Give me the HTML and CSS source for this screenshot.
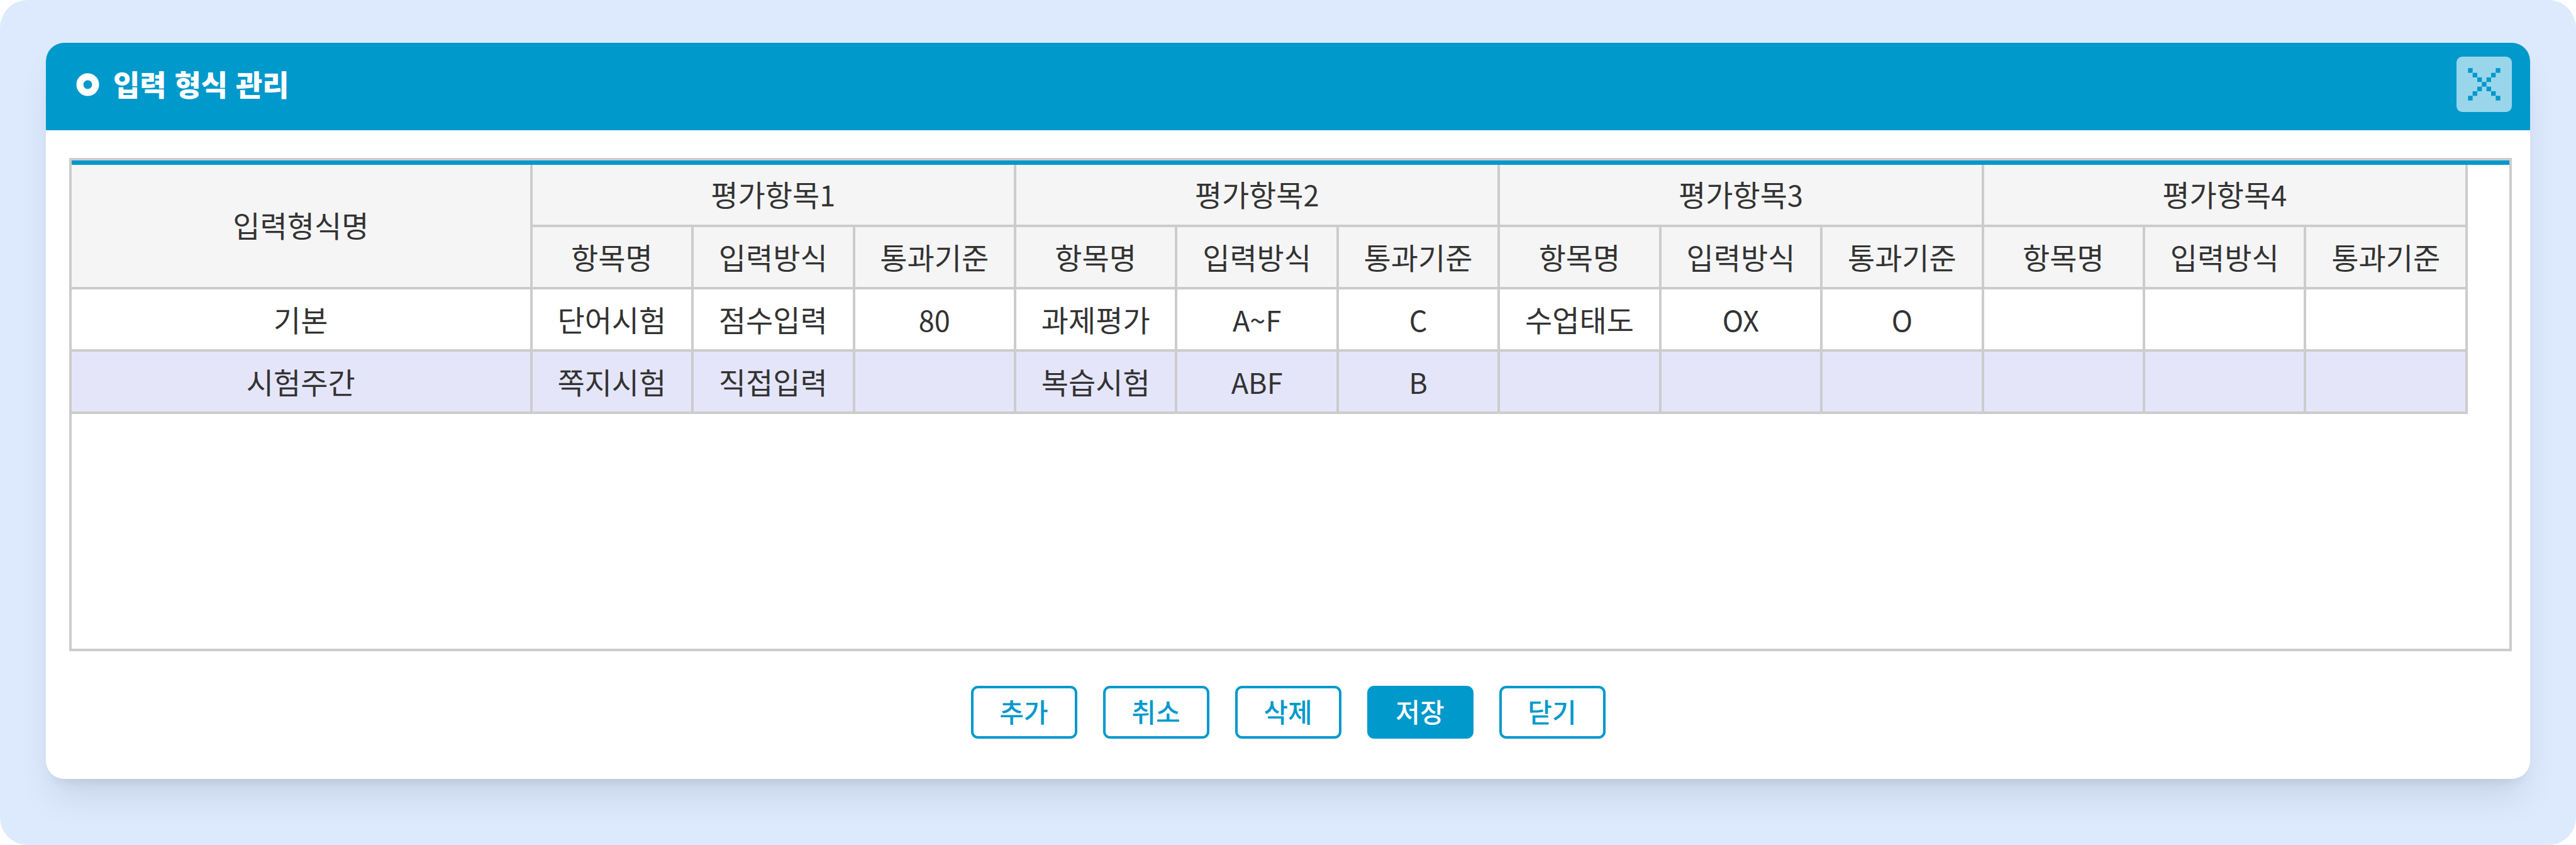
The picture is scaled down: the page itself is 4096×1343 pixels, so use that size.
FILE: index.html
```html
<!DOCTYPE html>
<html lang="ko">
<head>
<meta charset="utf-8">
<meta name="viewport" content="width=device-width, initial-scale=1">
<title>입력 형식 관리</title>
<link rel="stylesheet" href="styles.css">
</head>
<body>
<main class="stage">
  <section class="dialog" aria-labelledby="dialog-title">
    <header class="dialog-header">
      <svg class="bullet" viewBox="0 0 40 40" aria-hidden="true">
        <circle cx="20" cy="20" r="13.5" fill="none" stroke="#fff" stroke-width="12"/>
      </svg>
      <h1 class="dialog-title" id="dialog-title">입력 형식 관리</h1>
      <button class="close" type="button" aria-label="창 닫기">
        <svg class="close-icon" viewBox="0 0 96 96" aria-hidden="true">
          <rect width="96" height="96" rx="10" fill="#99d6eb"/>
          <path fill="#0099cc" d="M20 20h8v8h-8zM28 28h8v8h-8zM36 36h8v8h-8zM44 44h8v8h-8zM52 52h8v8h-8zM60 60h8v8h-8zM68 68h8v8h-8zM68 20h8v8h-8zM60 28h8v8h-8zM52 36h8v8h-8zM36 52h8v8h-8zM28 60h8v8h-8zM20 68h8v8h-8z"/>
        </svg>
      </button>
    </header>
    <div class="dialog-body">
      <div class="grid-frame">
        <table class="grid">
          <colgroup><col class="col-name"><col span="12"></colgroup>
          <thead>
            <tr class="groups"><th rowspan="2">입력형식명</th><th colspan="3">평가항목<span class="latin">1</span></th><th colspan="3">평가항목<span class="latin">2</span></th><th colspan="3">평가항목<span class="latin">3</span></th><th colspan="3">평가항목<span class="latin">4</span></th></tr>
            <tr><th>항목명</th><th>입력방식</th><th>통과기준</th><th>항목명</th><th>입력방식</th><th>통과기준</th><th>항목명</th><th>입력방식</th><th>통과기준</th><th>항목명</th><th>입력방식</th><th>통과기준</th></tr>
          </thead>
          <tbody>
            <tr><td>기본</td><td>단어시험</td><td>점수입력</td><td><span class="latin">80</span></td><td>과제평가</td><td><span class="latin">A~F</span></td><td><span class="latin">C</span></td><td>수업태도</td><td><span class="latin">OX</span></td><td><span class="latin">O</span></td><td></td><td></td><td></td></tr>
            <tr class="selected"><td>시험주간</td><td>쪽지시험</td><td>직접입력</td><td></td><td>복습시험</td><td><span class="latin">ABF</span></td><td><span class="latin">B</span></td><td></td><td></td><td></td><td></td><td></td><td></td></tr>
          </tbody>
        </table>
      </div>
    </div>
    <footer class="actions">
      <button class="btn" type="button">추가</button>
      <button class="btn" type="button">취소</button>
      <button class="btn" type="button">삭제</button>
      <button class="btn btn-primary" type="button">저장</button>
      <button class="btn" type="button">닫기</button>
    </footer>
  </section>
</main>
</body>
</html>
```
FILE: styles.css
```css
* {
  box-sizing: border-box;
}

body {
  margin: 0;
  background: #fff;
  color: #333;
  font-family: "Noto Sans CJK KR", sans-serif;
}

.stage {
  min-height: 100vh;
  padding: 68px 73px 105px;
  border-radius: 44px;
  background: #ddeafe;
}

.dialog {
  border-radius: 29px;
  background: #fff;
  box-shadow: 0 37px 55px -11px rgba(0, 0, 0, 0.1), 0 15px 22px -15px rgba(0, 0, 0, 0.1);
}

.dialog-header {
  display: flex;
  align-items: center;
  gap: 22px;
  height: 139px;
  padding: 0 29px 7px 48px;
  border-radius: 29px 29px 0 0;
  background: #0099cc;
  color: #fff;
}

.bullet {
  width: 37px;
  height: 37px;
}

.dialog-title {
  margin: 0;
  padding-bottom: 4px;
  font-size: 46px;
  line-height: 72px;
  font-weight: 900;
}

.close {
  width: 88px;
  height: 88px;
  margin-left: auto;
  padding: 0;
  border: 0;
  background: none;
}

.close-icon {
  display: block;
  width: 100%;
  height: 100%;
}

.dialog-body {
  padding: 44px 29px 0 37px;
}

.grid-frame {
  min-height: 784px;
  padding: 7px 66px 0 0;
  border: 4px solid #ccc;
  background: linear-gradient(#0099cc, #0099cc) 0 0 / 100% 7px no-repeat;
}

.grid {
  width: 100%;
  border-collapse: separate;
  border-spacing: 0;
  table-layout: fixed;
  font-size: 47px;
  line-height: 72px;
}

.col-name {
  width: 19.23%;
}

.grid th,
.grid td {
  height: 99px;
  padding: 0 0 2px;
  border-right: 4px solid #ccc;
  border-bottom: 4px solid #ccc;
  font-weight: 400;
  text-align: center;
  white-space: nowrap;
}

.grid th {
  background: #f5f5f5;
}

.grid .groups th {
  padding-bottom: 4px;
}

.latin {
  font-size: 45px;
  line-height: 1;
}

.selected {
  background: #e5e5fa;
}

.actions {
  display: flex;
  justify-content: center;
  gap: 41px;
  padding: 55px 29px 64px;
}

.btn {
  width: 169px;
  height: 84px;
  padding: 0 0 4px;
  border: 4px solid #0099cc;
  border-radius: 11px;
  background: #fff;
  color: #0099cc;
  font-family: inherit;
  font-size: 42px;
  line-height: 64px;
  font-weight: 500;
}

.btn-primary {
  background: #0099cc;
  color: #fff;
}
```
